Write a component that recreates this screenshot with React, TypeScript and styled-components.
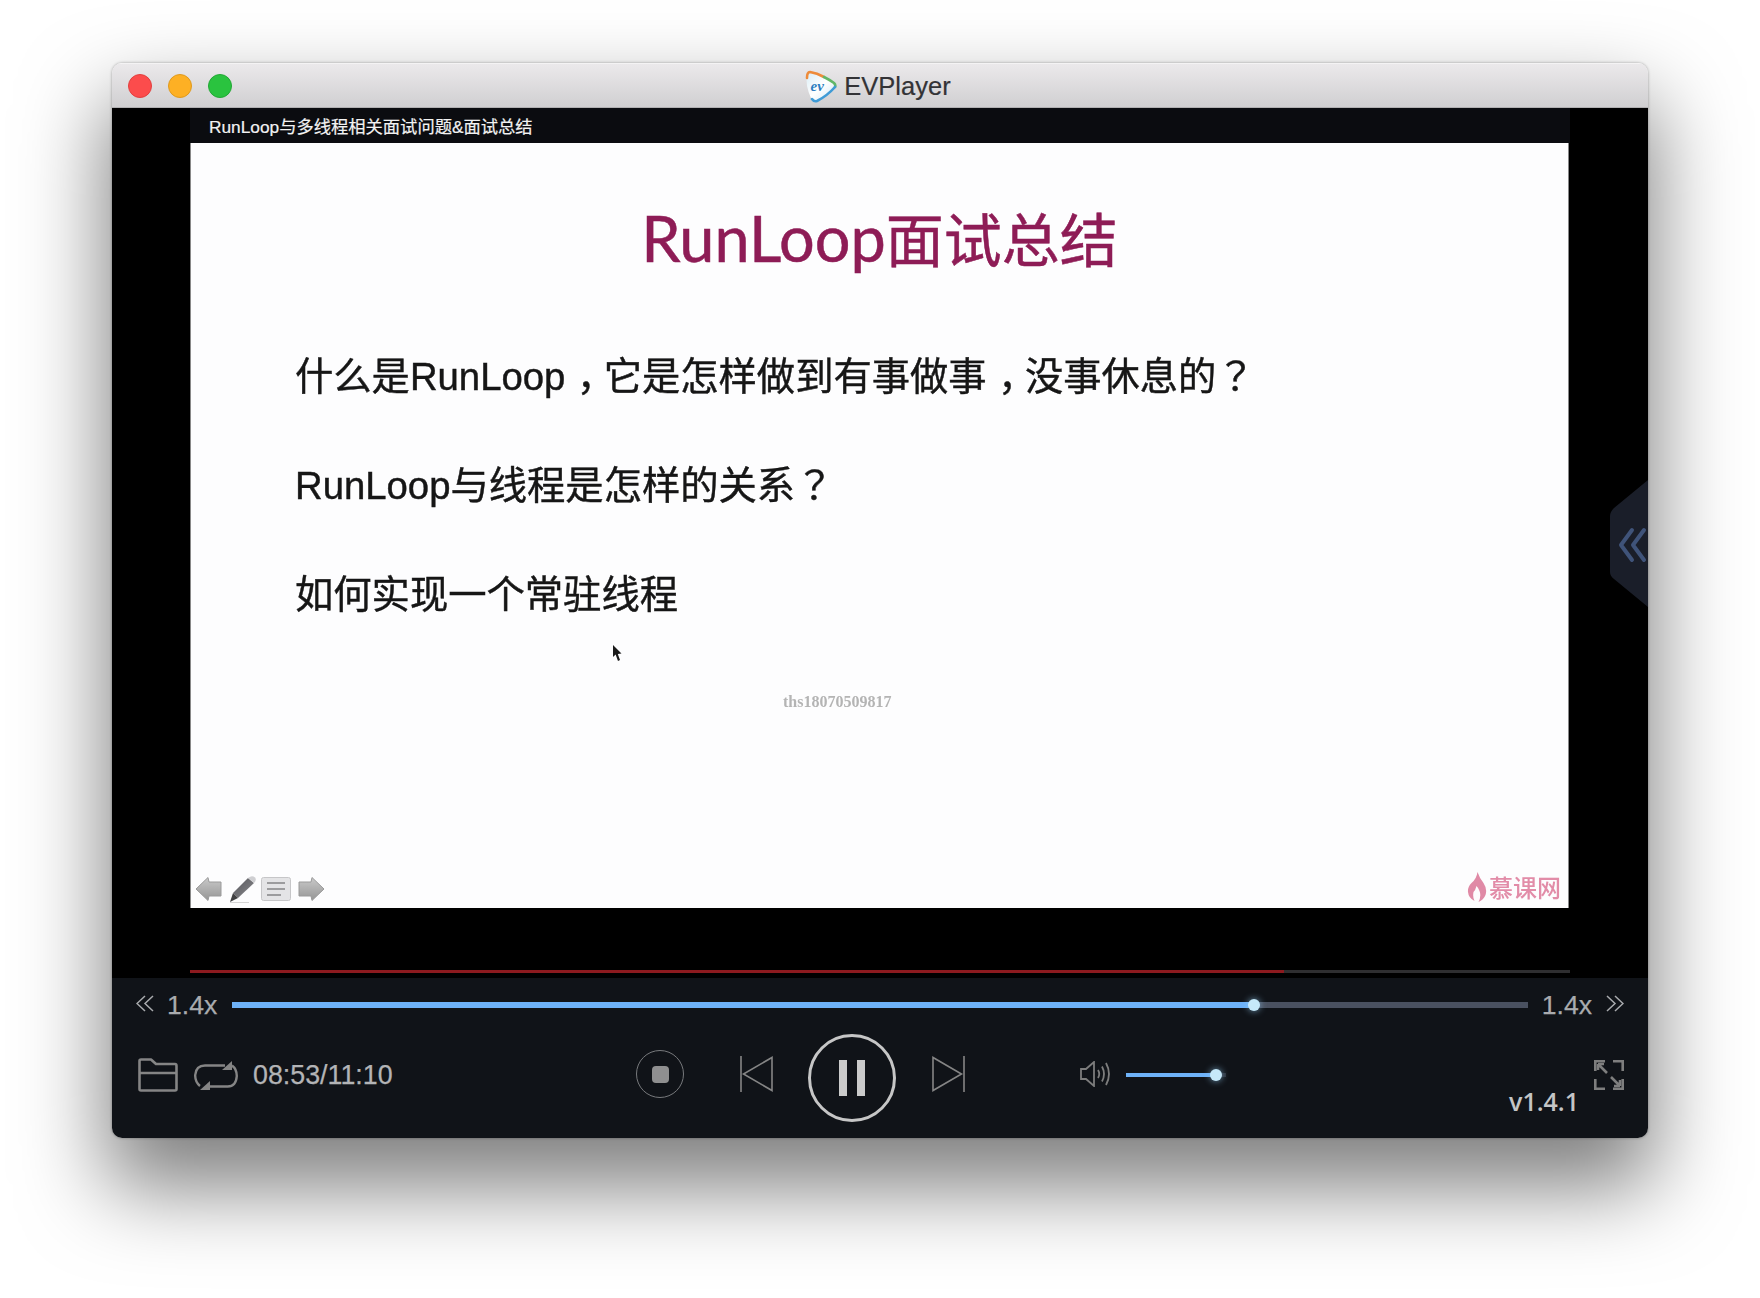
import React from 'react';
import styled, { createGlobalStyle } from 'styled-components';

const GlobalStyle = createGlobalStyle`
  html, body {
    margin: 0;
    background: #fff;
  }
  body {
    font-family: "Liberation Sans", "Noto Sans CJK SC", sans-serif;
  }
`;

const Page = styled.div`
  width: 1760px;
  height: 1298px;
  padding: 63px 112px 0;
  box-sizing: border-box;
  overflow: hidden;
`;

const Window = styled.div`
  display: flex;
  flex-direction: column;
  width: 1536px;
  height: 1075px;
  border-radius: 10px;
  overflow: hidden;
`;

const WindowShadow = styled.div`
  border-radius: 10px;
  box-shadow: 0 44px 84px 6px rgba(0, 0, 0, 0.5), 0 0 3px rgba(0, 0, 0, 0.35);
`;

const TitleBar = styled.div`
  position: relative;
  display: flex;
  align-items: center;
  justify-content: center;
  gap: 7px;
  height: 45px;
  flex: none;
  padding-right: 5px;
  box-sizing: border-box;
  background: linear-gradient(to bottom, #ebe9eb, #d0cfd1);
  border-top: 1px solid #f4f3f4;
  border-bottom: 1px solid #b1b0b2;
`;

const Lights = styled.div`
  position: absolute;
  left: 16px;
  top: 10px;
  display: flex;
  gap: 16px;
`;

const Light = styled.span<{ $color: string; $edge: string }>`
  width: 24px;
  height: 24px;
  box-sizing: border-box;
  border-radius: 50%;
  background: ${(p) => p.$color};
  border: 1px solid ${(p) => p.$edge};
`;

const AppName = styled.span`
  margin-top: 2px;
  font-size: 25.5px;
  color: #333336;
  -webkit-text-stroke: 0.2px #333336;
`;

const Stage = styled.div`
  position: relative;
  flex: none;
  height: 870px;
  background: #000;
  padding-left: 78px;
`;

const VideoColumn = styled.div`
  width: 1380px;
`;

const VideoHeader = styled.div`
  display: flex;
  align-items: center;
  height: 35px;
  padding-left: 19px;
  box-sizing: border-box;
  background: #0b0c10;
  color: #f2f2f2;
  font-size: 17.3px;
  -webkit-text-stroke: 0.2px #f2f2f2;
`;

const Slide = styled.div`
  position: relative;
  display: flex;
  flex-direction: column;
  height: 765px;
  margin-right: 1px;
  padding: 0 104px;
  box-sizing: border-box;
  background: #fdfdfe;
  border-left: 1px solid #888;
  border-right: 1px solid #888;
`;

const SlideTitle = styled.h1`
  margin: 51px 0 0;
  text-align: center;
  font-family: "Noto Sans CJK SC", sans-serif;
  font-size: 58px;
  font-weight: 400;
  line-height: 86px;
  color: #8e1c56;
  -webkit-text-stroke: 0.5px #8e1c56;
  filter: blur(0.4px);
`;

const TitleLatin = styled.span`
  font-family: Lato, sans-serif;
  font-size: 63px;
`;

const QuestionList = styled.div`
  display: flex;
  flex-direction: column;
  gap: 57px;
  margin-top: 70px;
`;

const Question = styled.p`
  margin: 0;
  height: 52px;
  font-size: 38.3px;
  line-height: 52px;
  color: #161616;
  -webkit-text-stroke: 0.45px #161616;
  filter: blur(0.3px);
`;

const QuestionMark = styled.span`
  font-family: "Noto Sans CJK TC", sans-serif;
  line-height: 0;
`;

const Comma = styled.span`
  display: inline-block;
  width: 1em;
  line-height: 0;
  transform: translateX(0.3em);
`;

const Watermark = styled.div`
  margin: 72px 0 0 488px;
  font-family: "Liberation Serif", serif;
  font-size: 16px;
  font-weight: 700;
  color: #b4b4b4;
  filter: blur(0.7px);
`;

const CursorMark = styled.svg`
  position: absolute;
  left: 421px;
  top: 502px;
`;

const SlideFooter = styled.div`
  position: absolute;
  left: 4px;
  right: 7px;
  bottom: 0;
  display: flex;
  align-items: center;
  justify-content: space-between;
`;

const SlideTools = styled.div`
  display: flex;
  align-items: center;
  gap: 4px;
  filter: blur(0.5px);
`;

const Brand = styled.div`
  display: flex;
  align-items: center;
  gap: 2px;
  margin-bottom: 4px;
  color: #e28ca8;
  font-size: 24px;
  font-weight: 500;
  filter: blur(0.5px);
`;

const PlayLine = styled.div`
  position: relative;
  height: 3px;
  margin-top: 62px;
  background: #2e2e30;
`;

const PlayLineFill = styled.div<{ $value: number }>`
  width: ${(p) => p.$value}%;
  height: 100%;
  background: #8c1a1f;
`;

const SideHandle = styled.svg`
  position: absolute;
  right: 0;
  top: 372px;
`;

const ControlBar = styled.div`
  display: flex;
  flex-direction: column;
  flex: 1;
  background: #101318;
`;

const SpeedRow = styled.div`
  display: flex;
  align-items: center;
  height: 52px;
  padding: 2px 24px 0;
  box-sizing: border-box;
`;

const SpeedLabel = styled.span<{ $side: 'left' | 'right' }>`
  color: #a9abae;
  font-size: 26.6px;
  -webkit-text-stroke: 0.25px #a9abae;
  margin: ${(p) => (p.$side === 'left' ? '0 15px 0 13px' : '0 14px 0 14px')};
`;

const Track = styled.div`
  position: relative;
  flex: 1;
  height: 6px;
  background: #4a5160;
`;

const TrackFill = styled.div<{ $value: number }>`
  position: relative;
  width: ${(p) => p.$value}%;
  height: 100%;
  background: #6eb2f8;
`;

const Thumb = styled.span`
  position: absolute;
  right: -6px;
  top: -3px;
  width: 12px;
  height: 12px;
  border-radius: 50%;
  background: #c6e9f9;
  box-shadow: 0 0 7px rgba(150, 210, 250, 0.7);
`;

const VolumeThumb = styled(Thumb)`
  top: -4px;
`;

const TransportRow = styled.div`
  display: flex;
  align-items: center;
  height: 88px;
  padding: 0 24px 0 26px;
`;

const LeftGroup = styled.div`
  display: flex;
  align-items: center;
  width: 498px;
  flex: none;
`;

const TimeText = styled.span`
  margin: 2px 0 0 15px;
  font-size: 26.8px;
  color: #b3b4b6;
  -webkit-text-stroke: 0.25px #b3b4b6;
`;

const StopButton = styled.div`
  display: flex;
  align-items: center;
  justify-content: center;
  width: 48px;
  height: 48px;
  flex: none;
  box-sizing: border-box;
  border: 1.5px solid #77797c;
  border-radius: 50%;
`;

const StopSquare = styled.span`
  width: 17px;
  height: 17px;
  border-radius: 4px;
  background: #8f8f90;
`;

const PauseButton = styled.div`
  display: flex;
  align-items: center;
  justify-content: center;
  gap: 10px;
  align-self: flex-end;
  width: 88px;
  height: 88px;
  flex: none;
  margin: 0 36px -4px 35px;
  box-sizing: border-box;
  border: 3px solid #c6c6c6;
  border-radius: 50%;
`;

const PauseBar = styled.span`
  width: 8px;
  height: 36px;
  background: #cbcbcb;
`;

const VolumeTrack = styled.div`
  position: relative;
  width: 100px;
  height: 4px;
  margin: 2px 0 0 14px;
  background: #2a2f38;
`;

const RightGroup = styled.div`
  display: flex;
  align-self: flex-start;
  gap: 15px;
  margin-left: auto;
`;

const Version = styled.span`
  margin-top: 57px;
  font-family: "Open Sans", sans-serif;
  font-size: 25px;
  font-weight: 600;
  line-height: 28px;
  color: #c4c5c6;
`;

const FullscreenIcon = styled.svg`
  margin-top: 30px;
`;

const Spaced = styled.svg<{ $left?: number; $top?: number }>`
  flex: none;
  margin-left: ${(p) => p.$left ?? 0}px;
  margin-top: ${(p) => p.$top ?? 0}px;
`;

function AppLogo() {
  return (
    <svg width="33" height="34" viewBox="0 0 33 34">
      <defs>
        <linearGradient id="logoFace" x1="0" y1="0" x2="1" y2="1">
          <stop offset="0" stopColor="#d9edf6" />
          <stop offset="0.5" stopColor="#ffffff" />
          <stop offset="1" stopColor="#cfe6f3" />
        </linearGradient>
      </defs>
      <path d="M6 3 Q18 5 30 14 Q33 17 30 20 Q22 28 13 32 Q9 33 7 29 Q1 16 3 6 Q3.5 3 6 3 Z" fill="url(#logoFace)" />
      <path d="M3 9 Q3 3 6 3 Q13 4 20 8" fill="none" stroke="#ee8b3a" strokeWidth="2.6" strokeLinecap="round" />
      <path d="M20 8 Q26 11 30 14 Q32 16 31 18" fill="none" stroke="#62b768" strokeWidth="2.6" strokeLinecap="round" />
      <path d="M31 18 Q23 27 13 32 Q10 33 8 30" fill="none" stroke="#3f9bd6" strokeWidth="2.6" strokeLinecap="round" />
      <text x="6.5" y="22" fontFamily="Liberation Serif, serif" fontStyle="italic" fontWeight="700" fontSize="15" fill="#2c7fc1">ev</text>
    </svg>
  );
}

function DoubleChevron({ dir }: { dir: 'left' | 'right' }) {
  const d =
    dir === 'left'
      ? 'M9 1 L1 8.5 L9 16 M17 1 L9 8.5 L17 16'
      : 'M1 1 L9 8.5 L1 16 M9 1 L17 8.5 L9 16';
  return (
    <Spaced $top={-3} width="18" height="17" viewBox="0 0 18 17" fill="none" stroke="#a9abae" strokeWidth="1.5">
      <path d={d} />
    </Spaced>
  );
}

function GreyArrow({ id, flip }: { id: string; flip?: boolean }) {
  return (
    <svg width="30" height="24" viewBox="0 0 30 24" style={flip ? { transform: 'scaleX(-1)' } : undefined}>
      <defs>
        <linearGradient id={id} x1="0" y1="0" x2="0" y2="1">
          <stop offset="0" stopColor="#c9c9c9" />
          <stop offset="1" stopColor="#959595" />
        </linearGradient>
      </defs>
      <path d="M13 0.5 L1 12 L13 23.5 L14 19 L26 19 L26 5 L14 5 Z" fill={`url(#${id})`} stroke="#9a9a9a" />
    </svg>
  );
}

function Pen() {
  return (
    <svg width="28" height="28" viewBox="0 0 28 28">
      <defs>
        <linearGradient id="penBody" x1="0" y1="0" x2="1" y2="1">
          <stop offset="0" stopColor="#55555a" />
          <stop offset="1" stopColor="#8a8a8e" />
        </linearGradient>
      </defs>
      <path d="M19 3 L25 8 L9 23 L4 18 Z" fill="url(#penBody)" />
      <path d="M19 3 Q23 0 26 2.5 Q28 5 25 8 Z" fill="#cfcfd2" />
      <path d="M4 18 L9 23 L1 27 Z" fill="#404042" />
      <path d="M1 27.5 L20 27.5" stroke="#d4d4d4" strokeWidth="1" />
    </svg>
  );
}

function ListBox() {
  return (
    <svg width="30" height="24" viewBox="0 0 30 24">
      <rect x="0.5" y="0.5" width="29" height="23" rx="2" fill="#e4e4e6" stroke="#c6c6c8" />
      <path d="M6 6 H24 M6 12 H24 M6 18 H20" stroke="#9c9c9e" strokeWidth="2.2" />
    </svg>
  );
}

function Flame() {
  return (
    <svg width="20" height="30" viewBox="0 0 19 30">
      <path
        d="M10 0 Q12 6 16 11 Q20 17 18 23 Q16 28 11 30 Q14 24 12 19 Q11 16 9 14 Q8 18 6 20 Q5 25 7 29 Q1 26 0.5 20 Q0 15 4 11 Q9 7 10 0 Z"
        fill="#e08aa6"
      />
    </svg>
  );
}

export default function App() {
  return (
    <Page>
      <GlobalStyle />
      <WindowShadow>
        <Window>
          <TitleBar>
            <Lights>
              <Light $color="#fc4c4c" $edge="#e2403f" />
              <Light $color="#fdb024" $edge="#df9a1e" />
              <Light $color="#2ac33f" $edge="#22a835" />
            </Lights>
            <AppLogo />
            <AppName>EVPlayer</AppName>
          </TitleBar>
          <Stage>
            <VideoColumn>
              <VideoHeader>RunLoop与多线程相关面试问题&amp;面试总结</VideoHeader>
              <Slide>
                <SlideTitle>
                  <TitleLatin>RunLoop</TitleLatin>面试总结
                </SlideTitle>
                <QuestionList>
                  <Question>
                    什么是RunLoop<Comma>，</Comma>它是怎样做到有事做事<Comma>，</Comma>没事休息的<QuestionMark>？</QuestionMark>
                  </Question>
                  <Question>
                    RunLoop与线程是怎样的关系<QuestionMark>？</QuestionMark>
                  </Question>
                  <Question>如何实现一个常驻线程</Question>
                </QuestionList>
                <Watermark>ths18070509817</Watermark>
                <CursorMark width="10" height="17" viewBox="0 0 10 17">
                  <path d="M1 0 L1 12 L3.6 9.6 L6 16 L8 15 L5.8 9 L9.5 8.6 Z" fill="#1a1a1a" />
                </CursorMark>
                <SlideFooter>
                  <SlideTools>
                    <GreyArrow id="arrowBack" />
                    <Pen />
                    <ListBox />
                    <GreyArrow id="arrowNext" flip />
                  </SlideTools>
                  <Brand>
                    <Flame />
                    慕课网
                  </Brand>
                </SlideFooter>
              </Slide>
              <PlayLine>
                <PlayLineFill $value={79.3} />
              </PlayLine>
            </VideoColumn>
            <SideHandle width="38" height="127" viewBox="0 0 38 127">
              <path d="M38 0 L4 28 Q0 32 0 36 L0 92 Q0 96 4 99 L38 127 Z" fill="#1a1e29" />
              <path
                d="M22 50 L11 65 L22 80 M34 50 L23 65 L34 80"
                fill="none"
                stroke="#3f5379"
                strokeWidth="4"
                strokeLinecap="round"
                strokeLinejoin="round"
              />
            </SideHandle>
          </Stage>
          <ControlBar>
            <SpeedRow>
              <DoubleChevron dir="left" />
              <SpeedLabel $side="left">1.4x</SpeedLabel>
              <Track>
                <TrackFill $value={78.9}>
                  <Thumb />
                </TrackFill>
              </Track>
              <SpeedLabel $side="right">1.4x</SpeedLabel>
              <DoubleChevron dir="right" />
            </SpeedRow>
            <TransportRow>
              <LeftGroup>
                <Spaced $top={2} width="40" height="34" viewBox="0 0 40 34" fill="none" stroke="#858585" strokeWidth="2.6" strokeLinejoin="round">
                  <path d="M1.5 31 V3 Q1.5 1.5 3 1.5 H13 L18 6 H37 Q38.5 6 38.5 8 V31 Q38.5 32.5 37 32.5 H3 Q1.5 32.5 1.5 31 Z M1.5 15 H38.5" />
                </Spaced>
                <Spaced $left={16} $top={2} width="44" height="29" viewBox="0 0 44 29" fill="none" stroke="#858585" strokeWidth="2.4">
                  <path d="M6 25 Q1 21 1.2 14 Q2 4.5 11 4.5 H31" />
                  <path d="M38 4.5 Q42.8 8 42.8 15 Q42 26 33 25.5 H13" />
                  <path d="M28 9 L38 0 L38 9 Z" fill="#858585" stroke="none" />
                  <path d="M16 20 L6 29 L16 29 Z" fill="#858585" stroke="none" />
                </Spaced>
                <TimeText>08:53/11:10</TimeText>
              </LeftGroup>
              <StopButton>
                <StopSquare />
              </StopButton>
              <Spaced $left={56} width="33" height="36" viewBox="0 0 33 36" fill="none" stroke="#858585" strokeWidth="1.6">
                <path d="M1 0 V36 M32 1.5 V34.5 L3.5 18 Z" />
              </Spaced>
              <PauseButton>
                <PauseBar />
                <PauseBar />
              </PauseButton>
              <Spaced width="33" height="36" viewBox="0 0 33 36" fill="none" stroke="#858585" strokeWidth="1.6">
                <path d="M32 0 V36 M1 1.5 V34.5 L29.5 18 Z" />
              </Spaced>
              <Spaced $left={115} width="32" height="26" viewBox="0 0 32 26" fill="none" stroke="#7d7d7d" strokeWidth="1.8">
                <path d="M1 8 H6 L14 1 V25 L6 18 H1 Z" />
                <path d="M18 9 Q20.5 13 18 17" />
                <path d="M22 5.5 Q26 13 22 20.5" />
                <path d="M26 2 Q32 13 26 24" />
              </Spaced>
              <VolumeTrack>
                <TrackFill $value={90}>
                  <VolumeThumb />
                </TrackFill>
              </VolumeTrack>
              <RightGroup>
                <Version>v1.4.1</Version>
                <FullscreenIcon width="30" height="30" viewBox="0 0 30 30" fill="none" stroke="#7e7e7e" strokeWidth="2.6">
                  <path d="M1.3 11 V1.3 H11 M19 1.3 H28.7 V11 M28.7 19 V28.7 H19 M11 28.7 H1.3 V19" />
                  <path d="M4 4 L13 13 M4 4 H10 M4 4 V10 M26 26 L17 17 M26 26 H20 M26 26 V20" />
                </FullscreenIcon>
              </RightGroup>
            </TransportRow>
          </ControlBar>
        </Window>
      </WindowShadow>
    </Page>
  );
}
